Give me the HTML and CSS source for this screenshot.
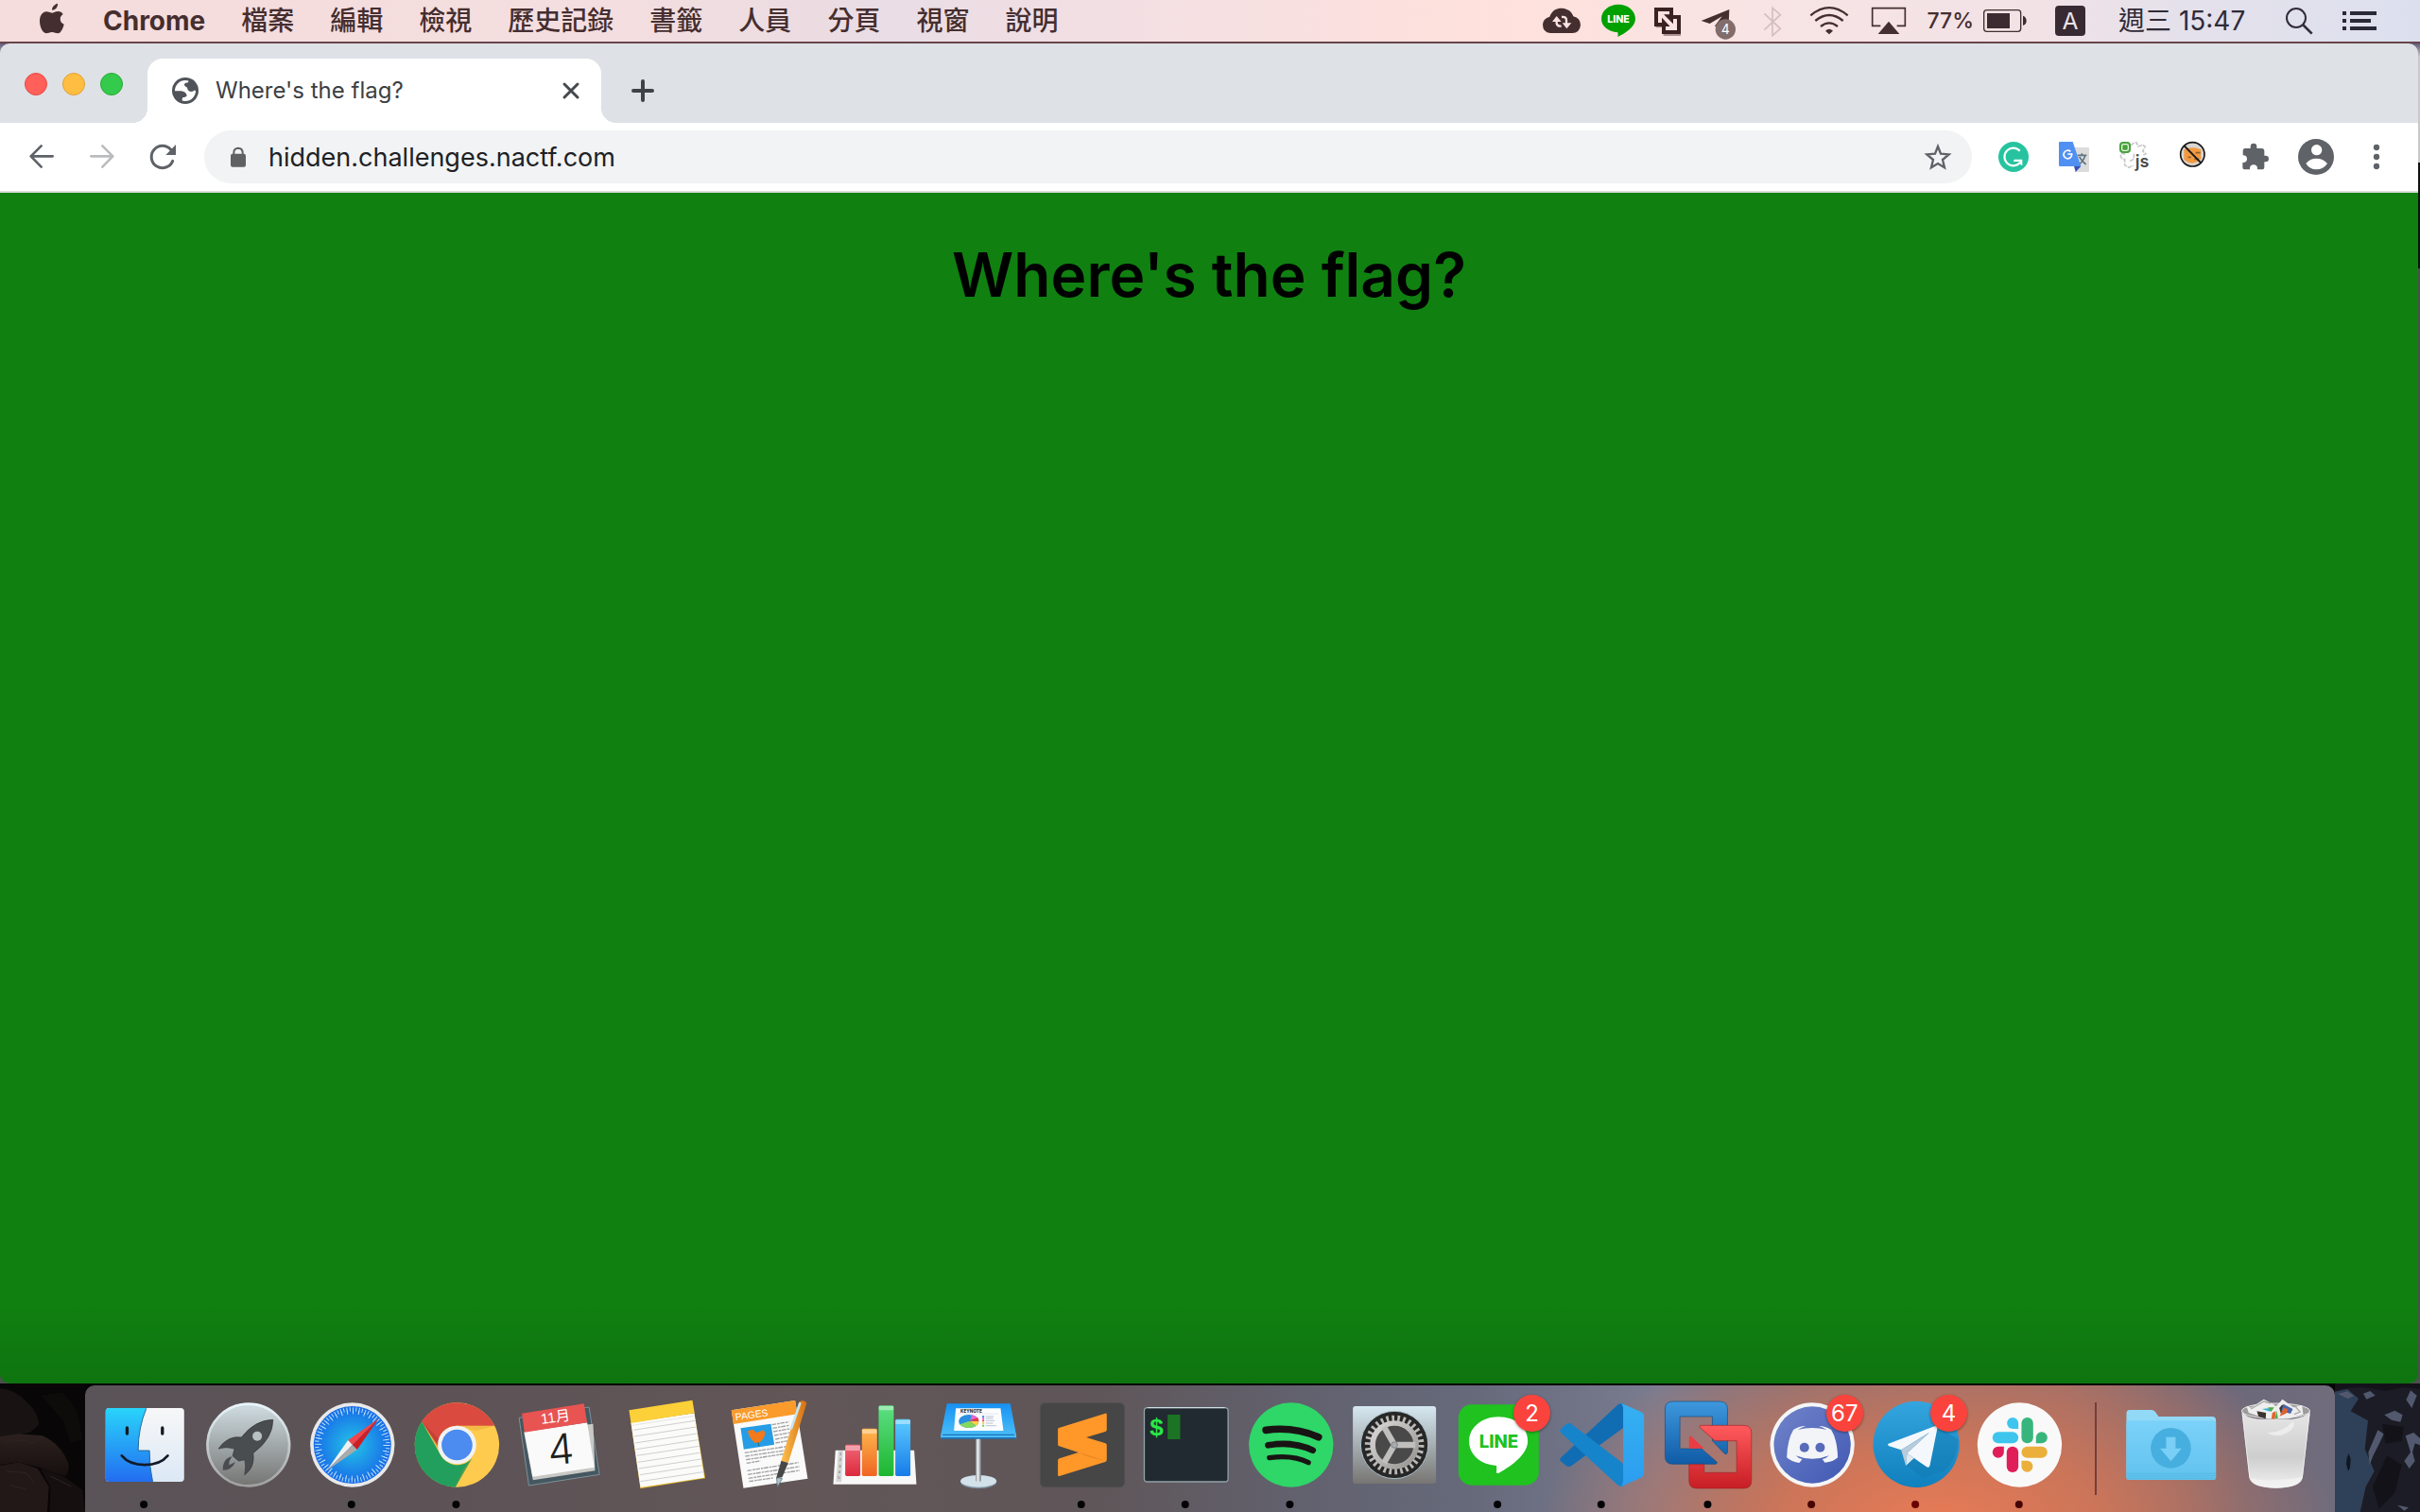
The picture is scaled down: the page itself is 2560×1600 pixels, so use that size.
FILE: index.html
```html
<!DOCTYPE html>
<html lang="zh-Hant">
<head>
<meta charset="utf-8">
<meta name="viewport" content="width=device-width, initial-scale=1">
<title>Where's the flag?</title>
<link rel="stylesheet" href="styles.css">
</head>
<body>
<header class="menubar">
  <nav class="menus" aria-label="選單">
    <button class="apple" aria-label="Apple"><svg width="40" height="44" viewBox="45 0 120 132"><path fill="#452e2f" d="M105 32C105 22 113 13 123 11C124 22 116 32 105 32ZM125 36C131 36 137 39 140 45C127 53 129 72 143 77C140 90 133 105 124 106C117 106 113 102 105 102C97 102 93 106 86 106C76 105 66 87 66 67C66 47 77 37 88 37C95 37 100 41 105 41C110 41 116 36 125 36Z"/></svg></button>
    <button class="app-name">Chrome</button>
    <button>檔案</button><button>編輯</button><button>檢視</button><button>歷史記錄</button><button>書籤</button><button>人員</button><button>分頁</button><button>視窗</button><button>說明</button>
  </nav>
  <div class="status">
    <button aria-label="Cloud sync"><svg width="62" height="44" viewBox="63 0 186 132"><path fill="#452e2f" d="M120 105Q96 103 96 78Q97 58 118 53C126 30 144 25 158 26C176 28 188 36 193 52Q216 58 216 80Q213 104 190 105Z"/><g stroke="#fae3e1" stroke-width="7" fill="none"><path d="M140 62V74Q142 84 155 83M156 54Q171 52 171 64V80"/></g><path fill="#fae3e1" d="M126 69L140 51L155 69ZM158 73H187L172 91Z"/></svg></button>
    <button aria-label="LINE"><svg width="57" height="44" viewBox="249 0 171 132"><path fill="#00a000" d="M336 14C367 14 390 34 390 60C390 85 358 106 333 117Q336 110 334 103C302 100 282 82 282 59C282 34 306 14 336 14Z"/><text class="logo-text" x="336" y="71" font-size="32" fill="#fff">LINE</text></svg></button>
    <button aria-label="VMware"><svg width="49" height="44" viewBox="420 0 147 132"><path fill="none" stroke="#a9928f" stroke-width="10" d="M455 83H480M479 109H534"/><path fill="none" stroke="#3b2220" stroke-width="12" d="M480 78H456V30H504V50M510 54H528V102H480V82"/><path fill="#3b2220" d="M510 46V76L480 46ZM474 56L500 84H474Z"/></svg></button>
    <button aria-label="Telegram, 4"><svg width="62" height="44" viewBox="567 0 186 132"><path fill="#452e2f" d="M599 66L688 30L686 78L641 84L665 52L626 75Z"/><circle cx="676" cy="93" r="32" fill="#836d6c"/><text class="badge-text" x="676" y="108" font-size="42" fill="#fff">4</text></svg></button>
    <button aria-label="Bluetooth"><svg width="48" height="44" viewBox="753 0 144 132"><path fill="none" stroke="#d5bebe" stroke-width="5" d="M799 43L850 91L825 113V25L850 47L799 95"/></svg></button>
    <button aria-label="Wi-Fi"><svg width="68" height="44" viewBox="897 0 204 132"><g fill="none" stroke="#452e2f" stroke-width="7"><path d="M946 49Q1005 0 1064 49M961 66Q1005 30 1049 66M978 84Q1005 62 1032 84"/></g><path fill="#452e2f" d="M993 98Q1005 87 1017 98L1005 109Z"/></svg></button>
    <button aria-label="AirPlay"><svg width="62" height="44" viewBox="1101 0 186 132"><path fill="none" stroke="#452e2f" stroke-width="5" d="M1168 82H1142V26H1246V82H1220"/><path fill="#452e2f" d="M1194 68L1228 108H1160Z"/></svg></button>
    <button class="battery" aria-label="電池 77%"><span>77%</span><svg width="71" height="44" viewBox="84 0 213 132"><rect x="116" y="32" width="117" height="68" rx="9" fill="none" stroke="#40302f" stroke-width="4"/><path fill="#3c2b30" d="M126 42H198V90H126ZM240 50Q251 54 251 66Q251 78 240 81Z"/></svg></button>
    <button aria-label="輸入法 A"><svg width="64" height="44" viewBox="297 0 192 132"><rect x="342" y="18" width="96" height="96" rx="12" fill="#382a32"/><text class="badge-text" x="390" y="94" font-size="74" fill="#eee3e9">A</text></svg></button>
    <button class="clock">週三 15:47</button>
    <button aria-label="搜尋"><svg width="65" height="44" viewBox="1011 0 195 132"><g fill="none" stroke="#302c38" stroke-width="6"><circle cx="1107" cy="57" r="30"/><path d="M1128 78L1157 107" stroke-width="8"/></g></svg></button>
    <button aria-label="通知中心"><svg width="68" height="44" viewBox="1206 0 204 132"><path fill="none" stroke="#292938" stroke-width="12" d="M1254 42H1266M1278 42H1362M1254 66H1266M1278 66H1344M1254 90H1266M1278 90H1362"/></svg></button>
  </div>
</header>

<div class="desktop">
<section class="window" aria-label="Chrome">
  <div class="tabstrip">
    <div class="lights">
      <button class="light red" aria-label="關閉"></button><button class="light yellow" aria-label="縮小"></button><button class="light green" aria-label="全螢幕"></button>
    </div>
    <div class="tab">
      <svg width="28" height="28" viewBox="486 246 84 84"><circle cx="528" cy="288" r="42" fill="#50545a"/><circle cx="528" cy="288" r="33" fill="#fff"/><path fill="#50545a" d="M488 289H514Q531 291 533 304Q531 309 519 310L517 326L500 318ZM540 250L537 262Q528 262 524 268Q526 276 534 278Q536 289 545 291Q553 291 556 287H566L556 256Z"/></svg>
      <span class="tab-title">Where's the flag?</span>
      <button class="tab-close" aria-label="關閉分頁"><svg width="20" height="20" viewBox="0 0 20 20"><path fill="none" stroke="#45494d" stroke-width="3" stroke-linecap="round" d="M3 3L17 17M17 3L3 17"/></svg></button>
    </div>
    <button class="new-tab" aria-label="新分頁"><svg width="24" height="24" viewBox="0 0 24 24"><path fill="none" stroke="#3f4347" stroke-width="4" stroke-linecap="round" d="M12 2V22M2 12H22"/></svg></button>
  </div>
  <div class="toolbar">
    <button aria-label="上一頁"><svg width="64" height="72" viewBox="-24 390 192 216"><path fill="none" stroke="#5f6368" stroke-width="8" stroke-linecap="round" stroke-linejoin="round" d="M107 496H38M71 463L38 496L71 530"/></svg></button>
    <button aria-label="下一頁"><svg width="64" height="72" viewBox="168 390 192 216"><path fill="none" stroke="#babcbe" stroke-width="8" stroke-linecap="round" stroke-linejoin="round" d="M229 496H298M265 463L298 496L265 530"/></svg></button>
    <button aria-label="重新載入"><svg width="64" height="72" viewBox="360 390 192 216"><path fill="none" stroke="#5f6368" stroke-width="9" stroke-linecap="round" d="M488 511A35 35 0 1 1 482 475"/><path fill="#5f6368" d="M498 459V492H466Z"/></svg></button>
    <form class="omnibox">
      <svg width="16" height="22" viewBox="672 466 48 66"><rect x="672" y="489" width="48" height="42" rx="6" fill="#5f6163"/><path fill="none" stroke="#5f6163" stroke-width="6" d="M682 492V484Q683 472 696 471Q709 472 710 484V492"/></svg>
      <input type="text" aria-label="網址" value="hidden.challenges.nactf.com">
      <button type="button" aria-label="加入書籤"><svg width="32" height="32" viewBox="1302 450 96 96"><path fill="none" stroke="#5f6368" stroke-width="7" d="M1350 465L1359 488L1385 490L1365 507L1371 532L1350 519L1329 532L1335 507L1315 490L1341 488Z"/></svg></button>
    </form>
    <button aria-label="Grammarly"><svg width="64" height="72" viewBox="114 390 192 216"><circle cx="210" cy="498" r="48" fill="#27c3a0"/><path fill="none" stroke="#fff" stroke-width="6.500" d="M230 479A28 28 0 1 0 230 517"/><path fill="#fff" d="M212 506H238V526L231 521L228 513H210Z"/></svg></button>
    <button aria-label="Google 翻譯"><svg width="64" height="72" viewBox="306 390 192 216"><path fill="#dcdcdc" d="M400 468H446Q450 468 450 472V542Q450 546 446 546H407Z"/><path fill="none" stroke="#5f7680" stroke-width="5" d="M413 493H442M427 487V493M437 494Q433 511 416 524M419 498Q428 514 440 522"/><path fill="#3a52b4" d="M402 528H424L407 546Z"/><path fill="#5090f2" d="M358 450H398L424 528H358Q354 528 354 524V454Q354 450 358 450Z"/><path fill="none" stroke="#fff" stroke-width="5" d="M391 481A13 13 0 1 0 395 489H382"/></svg></button>
    <button aria-label="JavaScript"><svg width="64" height="72" viewBox="498 390 192 216"><path fill="none" stroke="#c9c9c9" stroke-width="5" stroke-dasharray="14 3" d="M582 462L590 455L600 452L606 465L620 460L628 466L620 480L630 488L622 492M592 488V505L578 512M565 490Q550 482 550 495Q552 506 563 506V524L576 532L590 525"/><rect x="546" y="450" width="36" height="36" rx="12" fill="#48a13d"/><rect x="554" y="458" width="20" height="20" rx="5" fill="none" stroke="#e4f7dd" stroke-width="4"/><text class="logo-text js" x="618" y="531" font-size="54" fill="#4c4c4c">js</text></svg></button>
    <button aria-label="Cookie"><svg width="64" height="72" viewBox="690 390 192 216"><circle cx="778" cy="490" r="38" fill="#d9d5d0" stroke="#171717" stroke-width="5"/><path fill="#f29a42" d="M751 475Q778 462 805 475V505Q778 530 751 507Z"/><path stroke="#925f31" stroke-width="5" d="M788 485H803M764 499H773M784 505H798"/><path stroke="#171717" stroke-width="6" d="M752 463L805 517"/></svg></button>
    <button aria-label="擴充功能"><svg width="64" height="72" viewBox="882 390 192 216"><path fill="#5f6368" d="M945 471H962V465A10 10 0 0 1 982 465V471H997Q1006 471 1006 480V494H1010A10 10 0 0 1 1010 514H1006V530Q1006 538 998 538H984V534Q983 523 972 523Q961 523 960 534V538H945Q937 538 937 530V516H941Q951 514 951 505Q951 495 941 493H938V479Q938 471 945 471Z"/></svg></button>
    <button aria-label="個人資料"><svg width="64" height="72" viewBox="1074 390 192 216"><circle cx="1170" cy="498" r="57" fill="#5f6368"/><circle cx="1172" cy="476" r="17" fill="#fff"/><path fill="#fff" d="M1138 519Q1151 503 1171 503Q1192 503 1206 519Q1193 538 1171 538Q1150 538 1138 519Z"/></svg></button>
    <button aria-label="更多"><svg width="64" height="72" viewBox="1266 390 192 216"><g fill="#5f6368"><circle cx="1362" cy="468" r="9.500"/><circle cx="1362" cy="498" r="9.500"/><circle cx="1362" cy="528" r="9.500"/></g></svg></button>
  </div>
  <main class="page"><h1>Where's the flag?</h1></main>
</section>
</div>

<footer class="bottom">
  <svg class="rocks" viewBox="0 72 270 408" preserveAspectRatio="none" aria-hidden="true">
    <defs><linearGradient id="rock" x1="0" y1="0" x2="0" y2="1"><stop offset="0" stop-color="#2c211f"/><stop offset="1" stop-color="#160f0e"/></linearGradient></defs>
    <rect y="72" width="270" height="408" fill="#080606"/>
    <path fill="#181312" d="M0 88Q50 92 84 130Q122 165 124 202L95 228L0 240Z"/>
    <path fill="url(#rock)" d="M0 240L60 232L135 238Q190 262 215 320Q224 348 207 366Q160 354 125 338L60 322L0 330Z"/>
    <path fill="#211817" d="M0 332L62 322L120 342L155 400L150 480H0Z"/>
    <path fill="#150f10" d="M128 342L205 368L262 410L270 480H158L160 400Z"/>
    <path fill="#0e0b0b" d="M130 110L200 100L245 160L262 250L225 260L200 190Z"/>
    <path fill="none" stroke="#2f2422" stroke-width="3" d="M14 260Q70 246 112 262M20 350L84 356L110 390M30 395L84 408M160 366L225 398"/>
  </svg>
  <nav class="dock" aria-label="Dock">
    <button aria-label="Finder"><svg viewBox="291 78 330 402">
      <defs><linearGradient id="fb" x1="0" y1="0" x2="0" y2="1"><stop offset="0" stop-color="#29d4fb"/><stop offset="1" stop-color="#236df0"/></linearGradient><linearGradient id="fw" x1="0" y1="0" x2="0" y2="1"><stop offset="0" stop-color="#f7f7f7"/><stop offset="1" stop-color="#dce8f6"/></linearGradient></defs>
      <rect x="335" y="150" width="249" height="234" rx="11" fill="url(#fw)"/><path fill="url(#fb)" d="M346 150H464Q438 214 438 285H474Q474 340 485 384H346Q335 384 335 373V161Q335 150 346 150Z"/><path fill="none" stroke="#206b9c" stroke-width="3" d="M464 151Q438 214 438 285H474Q474 340 484 383"/><path stroke="#141a20" stroke-width="10" stroke-linecap="round" fill="none" d="M403 213V231M515 213V231"/><path stroke="#121b29" stroke-width="8" stroke-linecap="round" fill="none" d="M386 301C418 340 500 340 532 301"/><circle class="dot" cx="456" cy="456" r="12"/></svg></button>
    <button aria-label="Launchpad"><svg viewBox="622 78 330 402">
      <defs><linearGradient id="lp" x1="0" y1="0" x2="0" y2="1"><stop offset="0" stop-color="#d0dde2"/><stop offset="1" stop-color="#747472"/></linearGradient><linearGradient id="lr" x1="0" y1="0" x2="0" y2="1"><stop offset="0" stop-color="#e9f6fa"/><stop offset="1" stop-color="#a0a0a0"/></linearGradient></defs>
      <circle cx="789" cy="267" r="130" fill="url(#lp)" stroke="url(#lr)" stroke-width="8"/><path fill="#4a4d50" stroke="#303335" stroke-width="2" d="M867 187Q809 188 767 243Q724 236 694 279Q718 271 745 279L739 302L758 318L777 314Q783 333 777 362Q811 338 804 293Q867 247 867 187Z"/><circle cx="817" cy="239" r="15" fill="#b7c0c3"/><path fill="#4a4d50" d="M738 304Q707 309 708 347Q735 348 748 321L728 331Q726 317 738 304Z"/></svg></button>
    <button aria-label="Safari"><svg viewBox="952 78 330 402">
      <defs><radialGradient id="sf"><stop offset="0" stop-color="#24c4e7"/><stop offset="1" stop-color="#176be8"/></radialGradient></defs>
      <circle cx="1119" cy="267" r="134" fill="#e9e9e9"/><circle cx="1119" cy="267" r="123" fill="url(#sf)"/><circle cx="1119" cy="267" r="113" fill="none" stroke="#b9dff7" stroke-width="13" stroke-dasharray="3 6.860"/><circle cx="1119" cy="267" r="104" fill="none" stroke="#c3e5f7" stroke-width="12" stroke-dasharray="3 15.150"/><path fill="#f0464a" d="M1202 184L1105 252L1119 267Z"/><path fill="#cf1d24" d="M1202 184L1119 267L1134 282Z"/><path fill="#f0f0f0" d="M1037 349L1105 252L1119 267Z"/><path fill="#aaa" d="M1037 349L1119 267L1134 282Z"/><circle class="dot" cx="1116" cy="456" r="12"/></svg></button>
    <button aria-label="Chrome"><svg viewBox="-7 78 330 402">
      <circle cx="159" cy="267" r="134" fill="#fecb4e"/><path fill="#db4a3f" d="M47 193A134 134 0 0 1 278 206H159A60 60 0 0 0 99 270Z"/><path fill="#229f5c" d="M47 193L106 297A60 60 0 0 0 207 308L154 401A134 134 0 0 1 47 193Z"/><path fill="#d8942d" opacity=".3" d="M159 206H278L219 223ZM207 308L175 350L154 400Z"/><path fill="#962f2b" opacity=".35" d="M47 193L99 278L102 250Z"/><circle cx="159" cy="267" r="61" fill="#f2f2f2"/><circle cx="159" cy="267" r="49" fill="#4c8bf0"/><circle class="dot" cx="156" cy="456" r="12"/></svg></button>
    <button aria-label="行事曆"><svg viewBox="324 78 330 402">
      <path fill="#455760" stroke="#7c929b" stroke-width="3" d="M357 181L579 147L612 361L388 396Z"/><path fill="#c8c8c5" d="M372 226L592 200L598 349L401 379Z"/><path fill="#fafafa" d="M374 226L573 196L596 338L400 368Z"/><path fill="#e85452" d="M366 167L563 136L573 196L374 227Z"/><g transform="rotate(-8 475 180)" text-anchor="middle"><text class="cal" x="472" y="194" font-size="46" fill="#fff">11月</text></g><g transform="rotate(-5 489 280)" text-anchor="middle"><text class="cal four" x="489" y="327" font-size="132" fill="#202020">4</text></g></svg></button>
    <button aria-label="備忘錄"><svg viewBox="655 78 330 402">
      <path fill="#e1b326" d="M713 198L914 167L949 373L743 406Z"/><path fill="#fbfbf9" d="M713 196L914 166L946 371L743 402Z"/><path fill="#fbd038" d="M707 157L908 125L915 166L713 198Z"/><path fill="none" stroke="#bbb" stroke-width="2" stroke-dasharray="3 3" d="M717 205L913 175"/><path fill="none" stroke="#b8b8b8" stroke-width="2" d="M720 220L917 190M723 240L920 210M726 261L923 231M729 281L926 251M732 301L929 271M735 322L932 292M738 342L936 312M741 362L939 332M743 383L942 353"/></svg></button>
    <button aria-label="Pages"><svg viewBox="985 78 330 402">
      <defs><linearGradient id="pen" x1="0" y1="0" x2="1" y2="0"><stop offset="0" stop-color="#ffc04d"/><stop offset="1" stop-color="#d46e12"/></linearGradient></defs>
      <path fill="#fafafa" d="M1032 157L1234 126L1274 374L1070 404Z"/><path fill="#fa9b2c" d="M1032 157L1234 126L1241 169L1038 201Z"/><g transform="rotate(-8 1096 172)"><text class="cal" text-anchor="middle" x="1096" y="182" font-size="31" fill="#fff">PAGES</text></g><path fill="#269ce5" d="M1061 214L1157 200L1168 266L1071 281Z"/><path fill="#f27a1b" d="M1084 223L1099 218L1112 228L1134 220L1139 230Q1135 252 1118 260L1106 260Q1087 245 1084 223Z"/><path stroke="#27563c" stroke-width="2" d="M1116 259L1120 272"/><path fill="none" stroke="#a2a2a2" stroke-width="4" stroke-dasharray="14 3 8 2" d="M1160 203L1214 194M1163 214L1215 205M1165 225L1216 216M1168 237L1217 228M1171 249L1218 240M1172 261L1216 253M1074 292L1220 270M1076 303L1214 283M1078 314L1210 294M1080 325L1124 318M1082 349L1245 323M1084 361L1247 336M1086 373L1248 348M1088 383L1163 372"/><path fill="url(#pen)" d="M1247 130Q1262 122 1271 134L1212 324L1190 317Z"/><path fill="#464748" d="M1190 317L1212 324L1193 370L1174 373Z"/><path fill="#adc4cd" stroke="#4e626b" stroke-width="2" d="M1175 371L1193 374L1178 401Z"/><path stroke="#c5e6f3" stroke-width="8" stroke-linecap="round" d="M1249 136L1222 214"/></svg></button>
    <button aria-label="Numbers"><svg viewBox="26 78 330 402">
      <defs><linearGradient id="n1" x1="0" y1="0" x2="0" y2="1"><stop offset="0" stop-color="#f06778"/><stop offset="1" stop-color="#db2a3c"/></linearGradient><linearGradient id="n2" x1="0" y1="0" x2="0" y2="1"><stop offset="0" stop-color="#ffb84d"/><stop offset="1" stop-color="#ef6423"/></linearGradient><linearGradient id="n3" x1="0" y1="0" x2="0" y2="1"><stop offset="0" stop-color="#5ddf83"/><stop offset="1" stop-color="#1db630"/></linearGradient><linearGradient id="n4" x1="0" y1="0" x2="0" y2="1"><stop offset="0" stop-color="#5bccff"/><stop offset="1" stop-color="#177be9"/></linearGradient></defs>
      <path fill="#f8f8f8" d="M70 284H320L327 392H63Z"/><path fill="#d6d6d6" d="M79 286H94L89 385H72Z"/><g fill="#555" font-size="12" text-anchor="middle" class="cal"><text x="86" y="300">1</text><text x="85" y="319">2</text><text x="84" y="338">3</text><text x="82" y="357">4</text><text x="81" y="376">5</text></g><rect x="101" y="266" width="48" height="100" rx="5" fill="url(#n1)"/><rect x="154" y="215" width="48" height="151" rx="5" fill="url(#n2)"/><rect x="207" y="142" width="48" height="224" rx="5" fill="url(#n3)"/><rect x="260" y="185" width="48" height="181" rx="5" fill="url(#n4)"/><path opacity=".4" fill="#fff" d="M102 269H148V285H102ZM155 218H201V231H155ZM208 144H254V157H208ZM261 188H307V201H261Z"/></svg></button>
    <button aria-label="Keynote"><svg viewBox="357 78 330 402">
      <defs><linearGradient id="ky" x1="0" y1="0" x2="0" y2="1"><stop offset="0" stop-color="#1691f3"/><stop offset="1" stop-color="#4fc1f8"/></linearGradient><linearGradient id="pole" x1="0" y1="0" x2="1" y2="0"><stop offset="0" stop-color="#8a8f94"/><stop offset=".4" stop-color="#f1f4f6"/><stop offset="1" stop-color="#777d82"/></linearGradient></defs>
      <ellipse cx="525" cy="385" rx="57" ry="21" fill="#7d93a2"/><ellipse cx="525" cy="382" rx="57" ry="19" fill="#d2e1ea"/><rect x="516" y="246" width="17" height="138" rx="5" fill="url(#pole)"/><path fill="url(#ky)" d="M425 136H626L645 237V246H405V237Z"/><path fill="#1b75ba" d="M411 233H639V237H411ZM406 243H644V248H406Z"/><path fill="#fafcff" d="M453 151H595L604 222H447Z"/><text class="logo-text" x="502" y="164" font-size="14" fill="#333">KEYNOTE</text><path stroke="#bbb" d="M460 168H588"/><ellipse cx="494" cy="192" rx="32" ry="21" fill="#298fe0"/><path fill="#e06bd7" d="M498 189L504 172Q517 174 522 181Z"/><path fill="#ee3b45" d="M496 190L522 180Q528 187 525 193Z"/><path fill="#ffd13f" d="M496 192H526Q525 201 518 206Z"/><path fill="#84d95d" d="M494 192L518 206Q500 217 480 211L464 202Z"/><path stroke-width="6" stroke="#4395e3" d="M537 177H543"/><path stroke-width="6" stroke="#dc6ee1" d="M537 183H543"/><path stroke-width="6" stroke="#e74450" d="M537 190H543"/><path stroke-width="6" stroke="#f3d346" d="M537 198H543"/><path stroke-width="6" stroke="#73c75b" d="M537 206H543"/><path stroke="#bcc4cc" stroke-width="3" d="M548 177H573M548 183H571M548 190H576M548 198H571M548 206H582"/></svg></button>
    <button aria-label="Sublime Text"><svg viewBox="688 78 330 402">
      <rect x="722" y="134" width="267" height="267" rx="14" fill="#464646" stroke="#505050" stroke-width="3"/><path fill="#ff9829" d="M781 213L928 167Q933 166 933 171V219Q933 223 928 225L868 243L929 262Q933 264 933 268V314Q933 319 928 321L783 366Q778 367 778 362V316Q778 311 783 310L843 291L782 271Q778 269 778 266V217Q778 214 781 213Z"/><path fill="#d87718" opacity=".5" d="M843 291L828 286L933 318Q880 310 843 291Z"/><circle class="dot" cx="852" cy="456" r="12"/></svg></button>
    <button aria-label="iTerm"><svg viewBox="1018 78 330 402">
      <rect x="1052" y="149" width="266" height="235" rx="10" fill="#212a30" stroke="#92a1a7" stroke-width="4"/><path stroke="#d9eaf1" stroke-width="3" d="M1062 149H1308"/><text class="mono" text-anchor="middle" x="1091" y="236" font-size="78" fill="#2be646">$</text><rect x="1126" y="171" width="40" height="78" fill="#1b7424"/><circle class="dot" cx="1182" cy="456" r="12"/></svg></button>
    <button aria-label="Spotify"><svg viewBox="59 78 330 402">
      <circle cx="226" cy="267" r="134" fill="#2fd668"/><g fill="none" stroke="#191414" stroke-linecap="round"><path stroke-width="23" d="M146 220Q234 208 313 242"/><path stroke-width="20" d="M153 268Q230 254 295 284"/><path stroke-width="16" d="M157 308Q230 297 281 323"/></g><circle class="dot" cx="222" cy="456" r="12"/></svg></button>
    <button aria-label="系統偏好設定"><svg viewBox="390 78 330 402">
      <defs><linearGradient id="st" x1="0" y1="0" x2="0" y2="1"><stop offset="0" stop-color="#d6e8f1"/><stop offset="1" stop-color="#777572"/></linearGradient><linearGradient id="mt" x1="0" y1="0" x2="1" y2="1"><stop offset="0" stop-color="#dad9d8"/><stop offset="1" stop-color="#969491"/></linearGradient></defs>
      <rect x="423" y="144" width="264" height="246" rx="9" fill="url(#st)"/><circle cx="555" cy="267" r="107" fill="#272727" stroke="#a9bfc9" stroke-width="3"/><circle cx="555" cy="267" r="84" fill="none" stroke="#bbb9b7" stroke-width="20" stroke-dasharray="8 9.590"/><circle cx="555" cy="267" r="69" fill="#494949" stroke="url(#mt)" stroke-width="17"/><path stroke="#c1bfbd" stroke-width="19" d="M555 267H621M555 267L522 210M555 267L522 324"/><circle cx="555" cy="267" r="10" fill="#a6abae" stroke="#6d7072" stroke-width="2"/></svg></button>
    <button aria-label="LINE, 2"><svg viewBox="720 78 330 402">
      <rect x="758" y="139" width="255" height="256" rx="42" fill="#1fc21f"/><path fill="#fff" d="M885 178C940 178 978 212 978 254C978 294 934 329 885 357Q877 359 879 350V333C827 330 792 297 792 256C792 211 833 178 885 178Z"/><text class="logo-text" x="886" y="277" font-size="56" fill="#1fc21f">LINE</text><circle class="dot" cx="882" cy="456" r="12"/></svg><span class="badge">2</span></button>
    <button aria-label="Visual Studio Code"><svg viewBox="1051 78 330 402">
      <defs><linearGradient id="vs" x1="0" y1="0" x2="0" y2="1"><stop offset="0" stop-color="#34b1f1"/><stop offset="1" stop-color="#2c9df0"/></linearGradient></defs>
      <path fill="#106db4" d="M1085 307L1264 140Q1273 132 1282 136V213L1118 333Q1110 339 1102 334L1084 319Q1078 314 1085 307Z"/><path fill="#1684ca" d="M1102 200Q1110 195 1118 201L1282 326V398Q1273 401 1264 394L1085 229Q1078 223 1084 216Z"/><path fill="url(#vs)" d="M1274 134L1338 162Q1348 167 1348 177V356Q1348 366 1338 371L1274 400Q1282 392 1282 381V153Q1282 141 1274 134Z"/><circle class="dot" cx="1212" cy="456" r="12"/></svg></button>
    <button aria-label="VMware Fusion"><svg viewBox="92 78 330 402">
      <defs><linearGradient id="vb" x1="0" y1="0" x2="0" y2="1"><stop offset="0" stop-color="#3e98dd"/><stop offset="1" stop-color="#105ba6"/></linearGradient><linearGradient id="vr" x1="0" y1="0" x2="0" y2="1"><stop offset="0" stop-color="#ff5b5d"/><stop offset="1" stop-color="#c71d24"/></linearGradient></defs>
      <path fill="url(#vb)" stroke="#144f83" stroke-width="2" d="M147 129H297Q321 129 321 153V291Q319 299 312 295L273 254V177H170V279H238L287 321Q289 328 282 328H147Q123 328 123 304V153Q123 129 147 129Z"/>
      <path fill="url(#vr)" stroke="#9d292b" stroke-width="2" d="M237 205H373Q397 205 397 229V381Q397 405 373 405H223Q199 405 199 381V329H247V355H350V254H281L234 212Q230 206 237 205Z"/>
      <path fill="#e93d45" d="M199 243Q201 236 207 241L247 278H199Z"/><circle class="dot" cx="258" cy="456" r="12"/></svg></button>
    <button aria-label="Discord, 67"><svg viewBox="423 78 330 402">
      <defs><linearGradient id="dc" x1="0" y1="0" x2="1" y2="1"><stop offset="0" stop-color="#7184ca"/><stop offset="1" stop-color="#4058b3"/></linearGradient></defs>
      <circle cx="591" cy="267" r="134" fill="#f5f5f5"/><circle cx="591" cy="267" r="122" fill="url(#dc)"/><path fill="#f3f4f8" d="M531 219Q552 206 570 207Q557 212 545 219Q591 207 637 219Q624 212 612 207Q632 207 651 219Q670 248 672 307Q658 321 631 323L623 312Q637 309 644 301Q591 322 539 301Q545 309 559 312L550 324Q525 321 510 307Q512 250 531 219Z"/><g fill="#586bba"><circle cx="566" cy="275" r="15"/><circle cx="616" cy="275" r="15"/></g><circle class="dot warm" cx="588" cy="456" r="12"/></svg><span class="badge">67</span></button>
    <button aria-label="Telegram, 4"><svg viewBox="753 78 330 402">
      <defs><linearGradient id="tg" x1="0" y1="0" x2="0" y2="1"><stop offset="0" stop-color="#35a5df"/><stop offset="1" stop-color="#1080be"/></linearGradient></defs>
      <circle cx="921" cy="265" r="137" fill="url(#tg)"/><path fill="#1278b0" opacity=".4" d="M988 209L1054 250Q1052 310 1010 350L940 372L888 331Z"/><path fill="#f4f8fc" d="M833 263L981 207Q989 205 988 214L964 333Q962 341 954 337L892 293L963 227L873 283L835 271Q828 267 833 263Z"/><path fill="#b7cbda" d="M873 283L963 228L892 293L888 333Z"/><path fill="#dee9f1" d="M892 293L914 309L888 333Z"/><circle class="dot hot" cx="918" cy="456" r="12"/></svg><span class="badge">4</span></button>
    <button aria-label="Slack"><svg viewBox="1084 78 330 402">
      <circle cx="1250" cy="267" r="134" fill="#f9f9f9"/><g fill="#3ec5ee"><rect x="1164" y="226" width="82" height="36" rx="18"/><path d="M1246 216H1228A18 18 0 1 1 1246 198Z"/></g><g fill="#38b57d"><rect x="1256" y="180" width="37" height="82" rx="18"/><path d="M1302 262V244A18 18 0 1 1 1320 262Z"/></g><g fill="#e01e5a"><rect x="1209" y="272" width="37" height="82" rx="18"/><path d="M1200 272V290A18 18 0 1 1 1182 272Z"/></g><g fill="#ebb03c"><rect x="1256" y="272" width="82" height="36" rx="18"/><path d="M1256 317H1274A18 18 0 1 1 1256 335Z"/></g><circle class="dot warm" cx="1248" cy="456" r="12"/></svg></button>
    <span class="divider"></span>
    <button aria-label="下載"><svg viewBox="368 78 330 402">
      <defs><linearGradient id="fd" x1="0" y1="0" x2="0" y2="1"><stop offset="0" stop-color="#7bd1f9"/><stop offset="1" stop-color="#61c3ee"/></linearGradient></defs>
      <path fill="#92d9f8" d="M400 156H469Q477 156 482 163L492 177H662Q674 177 674 189V370Q674 378 666 378H398Q390 378 390 370V168Q390 156 400 156Z"/><path fill="url(#fd)" d="M390 198Q390 190 400 190H664Q674 190 674 198V370Q674 378 666 378H398Q390 378 390 370Z"/><circle cx="531" cy="277" r="64" fill="#47afdf"/><path fill="#79cff5" d="M516 242H546V278H565L531 319L497 278H516Z"/><path stroke="#4eb0dc" stroke-width="2" d="M390 358H674M390 365H674M390 373H674"/></svg></button>
    <button aria-label="垃圾桶"><svg viewBox="698 78 330 402">
      <defs><linearGradient id="tr" x1="0" y1="0" x2="0" y2="1"><stop offset="0" stop-color="#e6e6e6"/><stop offset=".6" stop-color="#cecece"/><stop offset="1" stop-color="#f1f1f1"/></linearGradient></defs>
      <ellipse cx="861" cy="159" rx="108" ry="24" fill="#9c9c9c" stroke="#e9e9e9" stroke-width="3"/><path fill="#eee" d="M768 143L782 149L823 122L852 137L862 145L882 122L917 148L944 141L948 170L900 184L830 184L775 165Z"/><path fill="#3b3532" d="M801 160L830 165L829 184L806 177ZM872 150L882 139L890 151L877 167Z"/><path fill="#4c66a5" d="M885 137L915 153L908 168L878 160Z"/><path fill="#e0632d" d="M886 149L900 154L894 167L873 176ZM850 165L861 160L858 185H847Z"/><path fill="#38b2d5" d="M817 153L850 149L842 161Z"/><path fill="#52ad47" d="M836 148H856L846 162ZM864 158L868 182L858 184Z"/><path fill="none" stroke="#a8a8a8" stroke-width="4" d="M782 153L823 129L845 135M923 145L938 162L919 170"/><path fill="url(#tr)" d="M753 160Q763 180 806 185H912Q957 180 970 160L946 371Q940 402 861 404Q785 402 777 371Z"/><path fill="#f4f4f4" opacity=".7" d="M832 228Q880 230 917 191Q928 220 880 236Q850 240 832 228ZM777 372Q830 388 946 369Q940 402 861 404Q785 402 777 372Z"/><path fill="none" stroke="#f3f3f3" stroke-width="3" opacity=".8" d="M755 168L778 371M968 168L945 371"/></svg></button>
  </nav>
  <svg class="rocks" viewBox="1050 72 270 408" preserveAspectRatio="none" aria-hidden="true">
    <rect x="1050" y="72" width="270" height="408" fill="#1c1c26"/>
    <path fill="#2f4158" d="M1050 98L1090 90L1125 120L1100 160L1155 190L1145 280L1175 350L1148 400L1130 480H1050Z"/>
    <path fill="#52596e" d="M1060 105L1090 97L1110 112L1090 120ZM1140 104L1162 96L1178 110L1150 122ZM1207 172L1240 158L1265 172L1258 194L1230 188ZM1274 238L1300 228L1320 246V268L1304 262L1296 290L1304 318L1286 342L1270 318L1290 290ZM1186 220L1205 232L1192 260L1172 300L1160 330L1156 290ZM1290 94L1310 110L1294 150L1276 124ZM1248 458L1284 466L1270 476ZM1184 438L1202 434L1194 450Z"/>
    <path fill="#141219" d="M1050 72H1320V90L1270 84L1210 96L1140 84L1090 86L1050 94ZM1200 200L1268 210L1262 256L1210 262ZM1215 300L1262 330L1240 420L1190 470L1170 400Z"/>
    <path fill="#111722" d="M1088 308L1094 294L1100 312L1098 340L1092 350L1086 328Z"/>
  </svg>
</footer>
</body>
</html>
```
FILE: styles.css
```css
* { box-sizing: border-box; }

body {
  margin: 0;
  min-height: 100vh;
  display: flex;
  flex-direction: column;
  background: #050404;
  font-family: Inter, "Noto Sans CJK TC", sans-serif;
  color: #452e2f;
}

button {
  margin: 0;
  padding: 0;
  border: 0;
  background: none;
  color: inherit;
  font: inherit;
}

svg { display: block; flex: none; }

.logo-text { font-family: Inter, sans-serif; font-weight: 800; text-anchor: middle; }
.logo-text.js { font-weight: 600; }
.badge-text { font-family: Inter, sans-serif; text-anchor: middle; }
.mono { font-family: "Liberation Mono", monospace; font-weight: 700; }
.cal { font-family: "Liberation Sans", "Noto Sans CJK TC", sans-serif; }
.cal.four { font-family: Inter, sans-serif; font-weight: 300; }

/* Menu bar */
.menubar {
  display: flex;
  justify-content: space-between;
  height: 46px;
  padding: 0 30px 0 35px;
  border-bottom: 2px solid #68454b;
  background: linear-gradient(90deg, #f5dcdd 0%, #f5dedf 24%, #ebdce2 34%, #eadde5 37%, #f6e0e2 50%, #ffe1dc 62%, #f8e4e4 72%, #f2e2e6 84%, #e5e1eb 90%, #dce0ee 100%);
  font-size: 28px;
  line-height: 40px;
}

.menus, .status { display: flex; align-items: center; height: 44px; }
.menus { gap: 38px; font-weight: 500; }
.menus button { white-space: nowrap; }
.apple { width: 36px; }
.menus .app-name { font-weight: 700; }
.battery { display: flex; align-items: center; justify-content: flex-end; width: 130px; font-size: 23px; font-weight: 500; }
.clock { width: 174px; padding-left: 18px; color: #302c38; text-align: left; white-space: nowrap; }

/* Browser window */
.desktop {
  flex: 1;
  display: flex;
  padding-right: 2px;
  background: linear-gradient(180deg, #625c78 0, #c9c9cc 14px, #c9c9cc 126px, #111 126px, #111 238px, #4e4e4e 238px);
}

.window {
  flex: 1;
  display: flex;
  flex-direction: column;
  border-radius: 10px;
  overflow: hidden;
}

.tabstrip {
  display: flex;
  align-items: flex-end;
  height: 84px;
  background: #dee1e6;
}

.lights { display: flex; gap: 16px; width: 156px; padding: 0 0 29px 26px; }
.light { width: 24px; height: 24px; border-radius: 50%; border: 1px solid; }
.red { background: #ff6059; border-color: #e24b41; }
.yellow { background: #ffbe41; border-color: #e1a032; }
.green { background: #34ca4b; border-color: #28a935; }

.tab {
  position: relative;
  display: flex;
  align-items: center;
  width: 480px;
  height: 68px;
  padding: 0 22px 0 26px;
  border-radius: 16px 16px 0 0;
  background: #fff;
  color: #3c4043;
  font-size: 24px;
}

.tab::before, .tab::after {
  content: "";
  position: absolute;
  bottom: 0;
  width: 16px;
  height: 16px;
}
.tab::before { left: -16px; background: radial-gradient(circle at 0 0, #dee1e6 16px, #fff 16px); }
.tab::after { right: -16px; background: radial-gradient(circle at 100% 0, #dee1e6 16px, #fff 16px); }
.tab-title { flex: 1; margin-left: 18px; line-height: 30px; white-space: nowrap; }
.new-tab { align-self: flex-end; height: 68px; margin-left: 32px; }

.toolbar {
  display: flex;
  align-items: center;
  height: 74px;
  padding: 0 12px;
  border-bottom: 2px solid #dadcdf;
  background: #fff;
}

.omnibox {
  flex: 1;
  display: flex;
  align-items: center;
  height: 56px;
  margin: 0 12px;
  padding: 0 20px 0 28px;
  border-radius: 28px;
  background: #f1f3f4;
}

.omnibox input {
  flex: 1;
  margin-left: 24px;
  padding: 0;
  border: 0;
  outline: 0;
  background: none;
  color: #202124;
  font: 27px Inter, sans-serif;
}

.page {
  flex: 1;
  padding: 42px 8px;
  background: linear-gradient(0deg, #0e740f 0, #108011 84px);
  color: #000;
  text-align: center;
}

h1 {
  margin: 0;
  font: 600 64px/90px Inter, sans-serif;
}

/* Dock */
.bottom {
  display: grid;
  grid-template-columns: 90px 1fr 90px;
  height: 136px;
}

.rocks { width: 100%; height: 136px; }

.dock {
  display: flex;
  margin-top: 2px;
  padding: 0 7px;
  border-radius: 10px 10px 0 0;
  background:
    radial-gradient(ellipse 420px 220px at 1960px 150px, #e97b55 0, #cc7559 40%, transparent 100%),
    linear-gradient(90deg, #5a5357 0%, #5e5356 20%, #625657 32%, #5f5659 45%, #62616e 54%, #666a7b 62%, #7a7c90 70%, #80727c 76%, #916d6d 88%, #6c697b 96%, #706c7c 100%);
}

.dock button { position: relative; flex: 1; min-width: 0; }
.dock svg { width: 100%; height: 134px; }
.dot { fill: #030306; }
.dot.warm { fill: #460503; }
.dot.hot { fill: #680302; }

.badge {
  position: absolute;
  top: 10px;
  left: 71px;
  width: 39px;
  height: 39px;
  border-radius: 50%;
  background: #fb433d;
  box-shadow: 0 1px 3px #0006;
  color: #fff;
  font-size: 24px;
  line-height: 39px;
}

.divider { width: 2px; height: 98px; margin: 18px 24px 0 25px; background: #713f3b; }
```
